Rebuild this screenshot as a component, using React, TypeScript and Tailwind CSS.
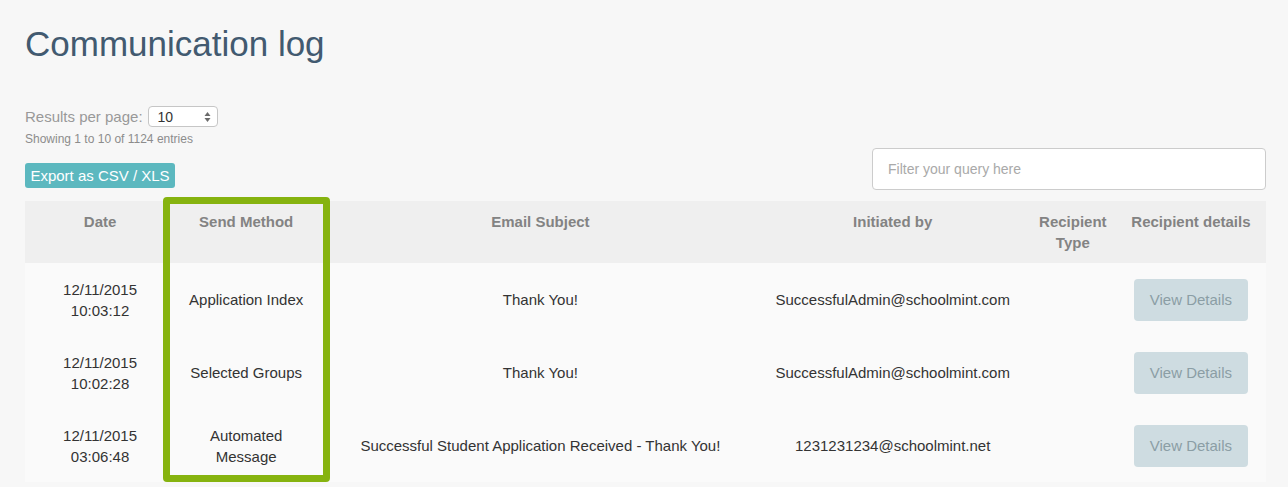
interface LogEntry {
  date: string
  time: string
  method: string
  subject: string
  initiatedBy: string
  recipientType: string
}

const entries: LogEntry[] = [
  {
    date: '12/11/2015',
    time: '10:03:12',
    method: 'Application Index',
    subject: 'Thank You!',
    initiatedBy: 'SuccessfulAdmin@schoolmint.com',
    recipientType: '',
  },
  {
    date: '12/11/2015',
    time: '10:02:28',
    method: 'Selected Groups',
    subject: 'Thank You!',
    initiatedBy: 'SuccessfulAdmin@schoolmint.com',
    recipientType: '',
  },
  {
    date: '12/11/2015',
    time: '03:06:48',
    method: 'Automated Message',
    subject: 'Successful Student Application Received - Thank You!',
    initiatedBy: '1231231234@schoolmint.net',
    recipientType: '',
  },
]

function App() {
  return (
    <div className="min-h-screen bg-[#f7f7f7] pl-[25px] pr-[22px] pt-[26px] font-['Liberation_Sans',Arial,sans-serif]">
      <h1 className="text-[35px] leading-[36px] font-normal text-[#425a70]">Communication log</h1>

      <div className="mt-[44px] flex items-end justify-between">
        <div className="flex flex-col">
          <div className="flex h-[21px] items-center gap-[5px]">
            <span className="text-[15px] leading-[21px] text-[#999999]">Results per page:</span>
            <div className="flex h-[21px] w-[70px] items-center justify-between rounded-[4px] border border-[#c6c6c6] bg-white pl-[9px] pr-[6px]">
              <span className="text-[14px] leading-none text-[#333]">10</span>
              <svg width="7" height="12" viewBox="0 0 7 12">
                <path d="M3.5 1 L6.5 5 L0.5 5 Z" fill="#6b6b6b" />
                <path d="M3.5 11 L6.5 7 L0.5 7 Z" fill="#6b6b6b" />
              </svg>
            </div>
          </div>
          <p className="mt-[4px] text-[12px] leading-[16px] text-[#8c8c8c]">Showing 1 to 10 of 1124 entries</p>
          <button className="mt-4 mb-[2px] h-[25px] w-[150px] rounded-[3px] bg-[#5cb8bf] text-[15px] leading-[25px] text-white">
            Export as CSV / XLS
          </button>
        </div>
        <input
          type="text"
          placeholder="Filter your query here"
          className="h-[42px] w-[394px] rounded-[4px] border border-[#cccccc] bg-white px-[15px] text-[14px] text-[#333] placeholder:text-[#a9a9a9] outline-none"
        />
      </div>

      <div className="relative mt-[11px]">
        <table className="w-full table-fixed border-collapse">
          <colgroup>
            <col className="w-[150px]" />
            <col className="w-[142px]" />
            <col className="w-[446px]" />
            <col className="w-[258px]" />
            <col className="w-[102px]" />
            <col className="w-[142px]" />
          </colgroup>
          <thead>
            <tr className="bg-[#efefef]">
              {['Date', 'Send Method', 'Email Subject', 'Initiated by', 'Recipient Type'].map((h) => (
                <th
                  key={h}
                  className="h-[62px] px-2 pt-[10px] pb-[10px] align-top text-center text-[15px] leading-[21px] font-bold text-[#838383]"
                >
                  {h}
                </th>
              ))}
              <th className="h-[62px] pl-1 pr-[12px] pt-[10px] pb-[10px] align-top text-center text-[15px] leading-[21px] font-bold text-[#838383]">
                Recipient details
              </th>
            </tr>
          </thead>
          <tbody className="bg-[#fafafa]">
            {entries.map((entry, index) => (
              <tr key={index} className="h-[73px] text-[15px] leading-[21px] text-[#333333]">
                <td className="px-2 text-center align-middle">
                  {entry.date}
                  <br />
                  {entry.time}
                </td>
                <td className="px-2 text-center align-middle">{entry.method}</td>
                <td className="px-2 text-center align-middle">{entry.subject}</td>
                <td className="px-2 text-center align-middle">{entry.initiatedBy}</td>
                <td className="px-2 text-center align-middle">{entry.recipientType}</td>
                <td className="pl-1 pr-[12px] text-center align-middle">
                  <button className="mx-auto h-[42px] w-[114px] rounded-[4px] bg-[#cedce1] text-[15px] text-[#8b9ea5]">
                    View Details
                  </button>
                </td>
              </tr>
            ))}
          </tbody>
        </table>

        {/* highlight around the Send Method column */}
        <div className="pointer-events-none absolute left-[138px] top-[-4px] h-[285px] w-[167px] rounded-[4px] border-[7px] border-[#86b30f]" />
      </div>
    </div>
  )
}

export default App
